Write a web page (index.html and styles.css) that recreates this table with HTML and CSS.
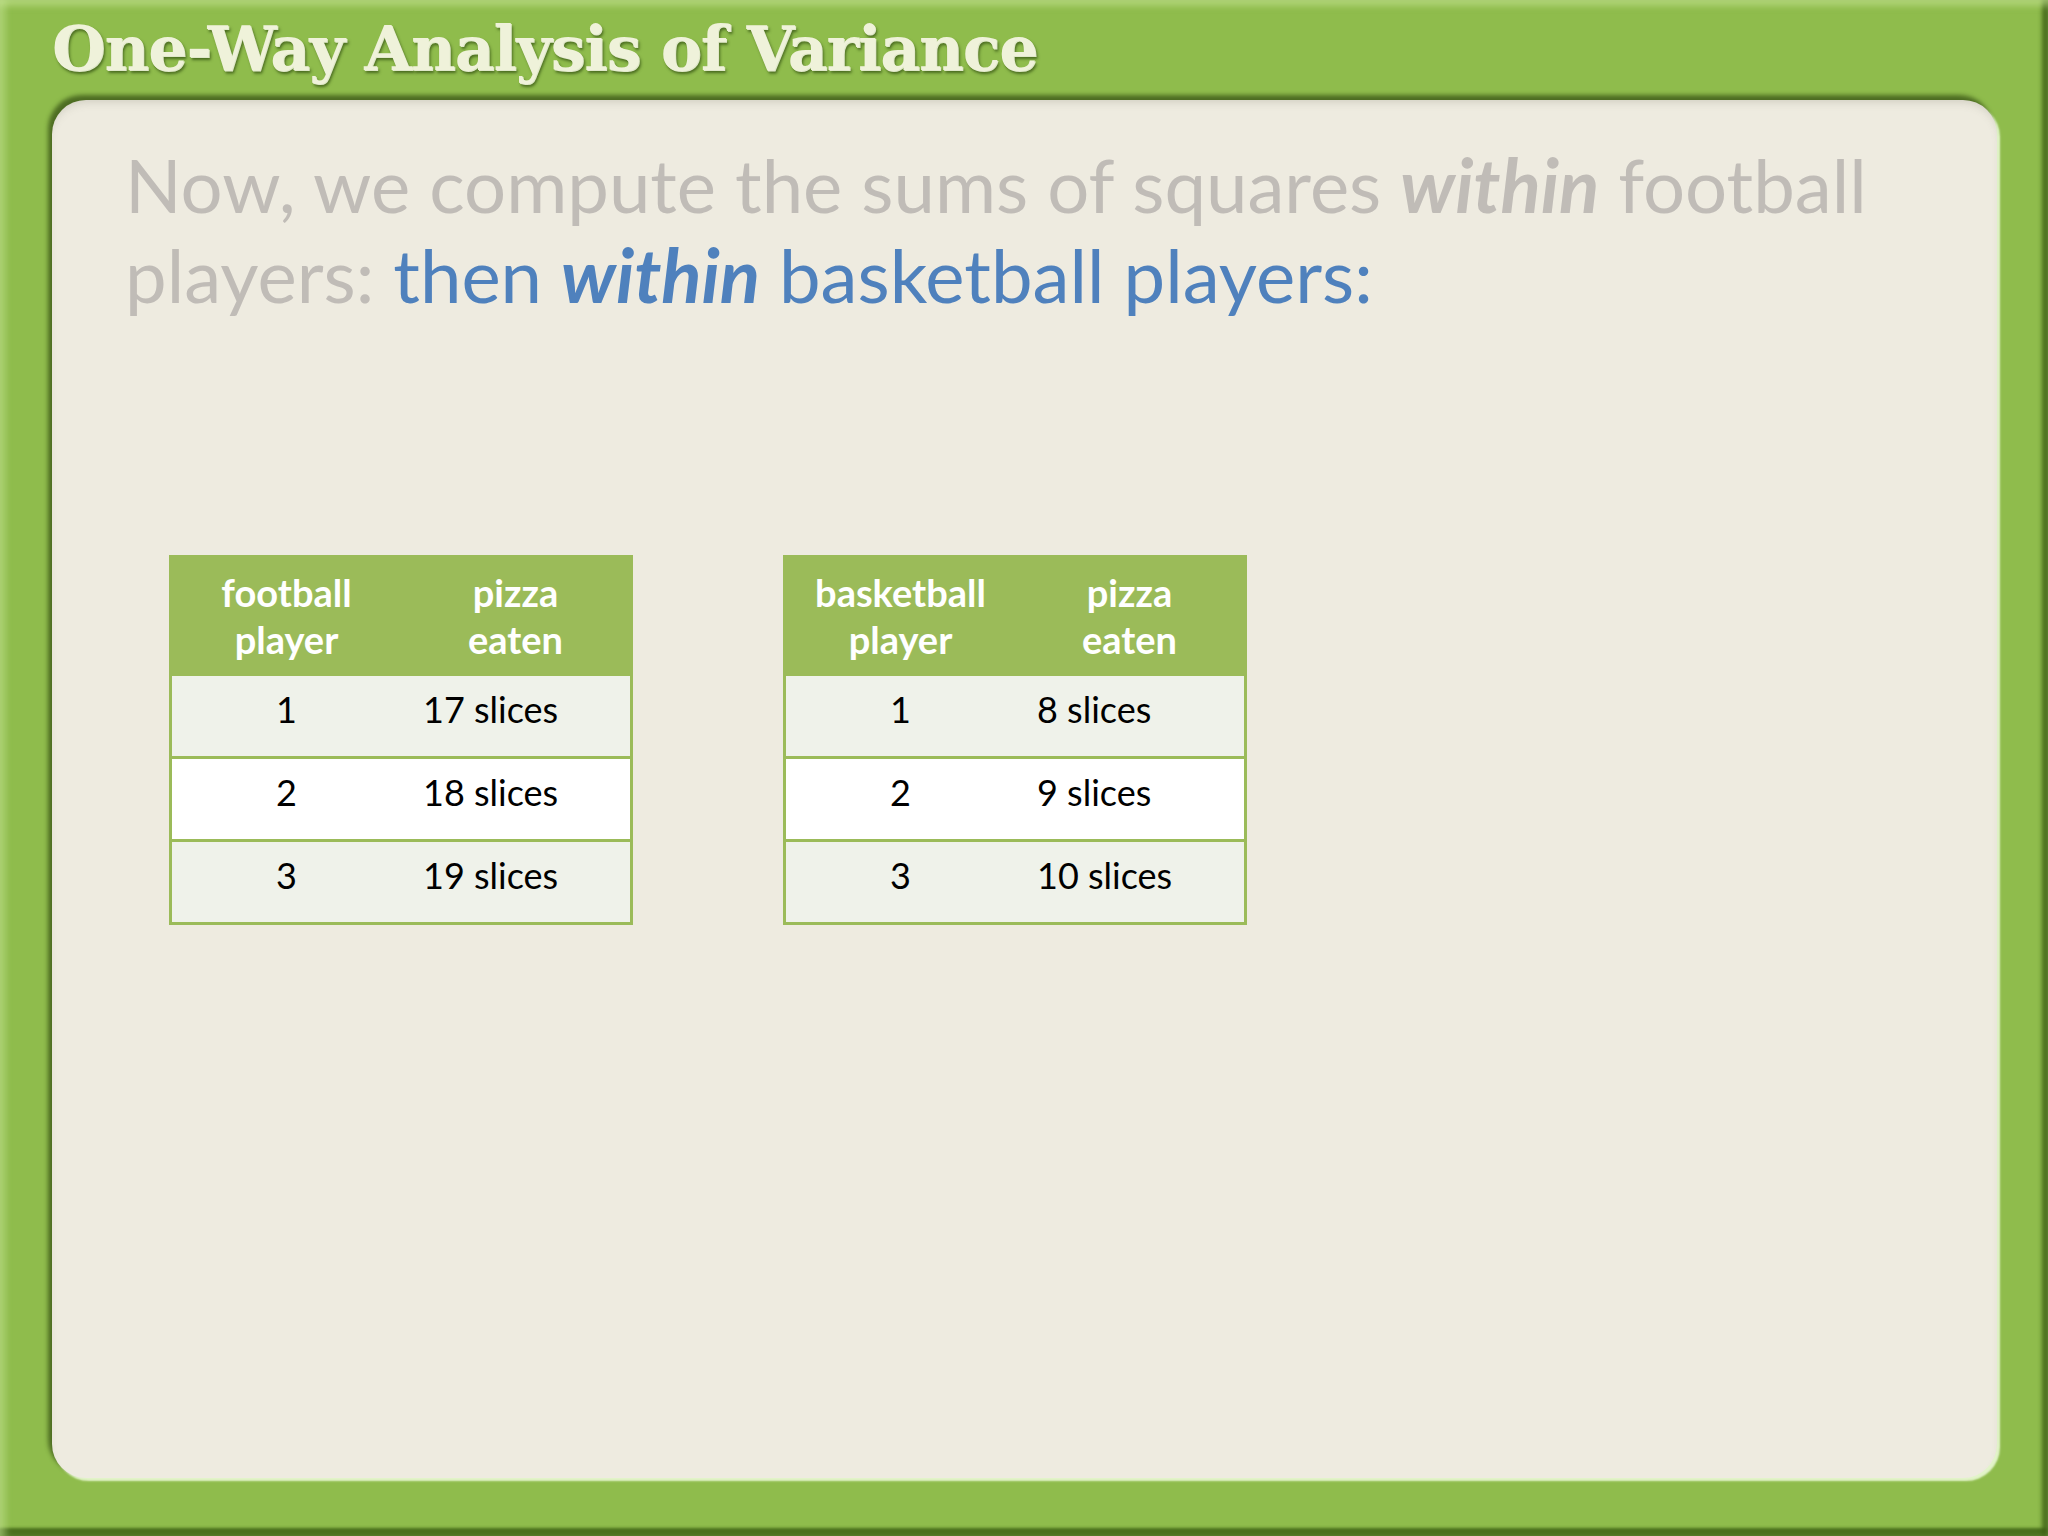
FILE: index.html
```html
<!DOCTYPE html>
<html>
<head>
<meta charset="utf-8">
<link rel="stylesheet" href="styles.css">
</head>
<body>
<div class="slide">
  <h1 class="title">One-Way Analysis of Variance</h1>
  <div class="panel">
    <p class="lead">Now, we compute the sums of squares <b><i>within</i></b> football<br>players: <span class="blue">then <b><i>within</i></b> basketball players:</span></p>
    <div class="tables">
      <table class="data">
        <thead>
          <tr><th>football<br>player</th><th>pizza<br>eaten</th></tr>
        </thead>
        <tbody>
          <tr class="odd"><td class="num">1</td><td class="val">17 slices</td></tr>
          <tr class="even"><td class="num">2</td><td class="val">18 slices</td></tr>
          <tr class="odd"><td class="num">3</td><td class="val">19 slices</td></tr>
        </tbody>
      </table>
      <table class="data">
        <thead>
          <tr><th>basketball<br>player</th><th>pizza<br>eaten</th></tr>
        </thead>
        <tbody>
          <tr class="odd"><td class="num">1</td><td class="val">8 slices</td></tr>
          <tr class="even"><td class="num">2</td><td class="val">9 slices</td></tr>
          <tr class="odd"><td class="num">3</td><td class="val">10 slices</td></tr>
        </tbody>
      </table>
    </div>
  </div>
</div>
</body>
</html>
```
FILE: styles.css
```css
html, body {
  margin: 0;
  padding: 0;
}
body {
  width: 2048px;
  height: 1536px;
  overflow: hidden;
  background: #8fbc4c;
}
.slide {
  box-sizing: border-box;
  width: 2048px;
  height: 1536px;
  background: #8fbc4c;
  padding: 0 51px 58px 52px;
  display: flex;
  flex-direction: column;
  box-shadow:
    inset 0 8px 6px -2px rgba(200, 230, 150, 0.55),
    inset 8px 0 6px -2px rgba(200, 230, 150, 0.45),
    inset -8px 0 4px -2px rgba(60, 95, 20, 0.85),
    inset 0 -10px 3px -2px rgba(70, 105, 25, 0.95);
}
.title {
  margin: 0;
  height: 100px;
  box-sizing: border-box;
  padding: 14px 0 0 0;
  font-family: "DejaVu Serif", serif;
  font-weight: 900;
  font-size: 61.5px;
  line-height: 70px;
  letter-spacing: -1px;
  color: #eff2da;
  text-shadow: 1px 1px 0 rgba(240, 245, 220, 0.9), 2px 3px 3px rgba(55, 85, 20, 0.8);
  white-space: nowrap;
}
.panel {
  flex: 1;
  background: #eeebe0;
  border-radius: 34px;
  box-shadow:
    -4px -5px 4px rgba(70, 100, 30, 0.9),
    3px 3px 2px rgba(235, 250, 215, 0.9),
    inset 0 6px 8px -4px rgba(120, 120, 100, 0.25);
  padding: 40px 0 0 73px;
}
.lead {
  margin: 0;
  width: 1800px;
  white-space: nowrap;
  font-family: Lato, "Open Sans", sans-serif;
  font-size: 74.3px;
  line-height: 89.5px;
  color: #c0bcb7;
}
.lead b {
  font-weight: bold;
}
.blue {
  color: #4f81bd;
}
.tables {
  display: flex;
  gap: 150px;
  margin: 236px 0 0 44px;
}
.data {
  border-collapse: collapse;
  width: 464px;
  font-family: Lato, "Open Sans", sans-serif;
  border: 3px solid #9bbb59;
}
.data th {
  width: 50%;
  height: 118px;
  box-sizing: border-box;
  background: #9bbb59;
  color: #ffffff;
  font-weight: bold;
  font-size: 38px;
  line-height: 47px;
  text-align: center;
  padding: 0;
}
.data td {
  height: 83px;
  box-sizing: border-box;
  font-size: 36px;
  color: #000;
  border-top: 3px solid #9bbb59;
  padding: 0 0 14px 0;
}
.data tr.odd td {
  background: #eff2ea;
}
.data tr.even td {
  background: #ffffff;
}
.data td.num {
  text-align: center;
}
.data td.val {
  text-align: left;
  padding-left: 22px;
}
```
